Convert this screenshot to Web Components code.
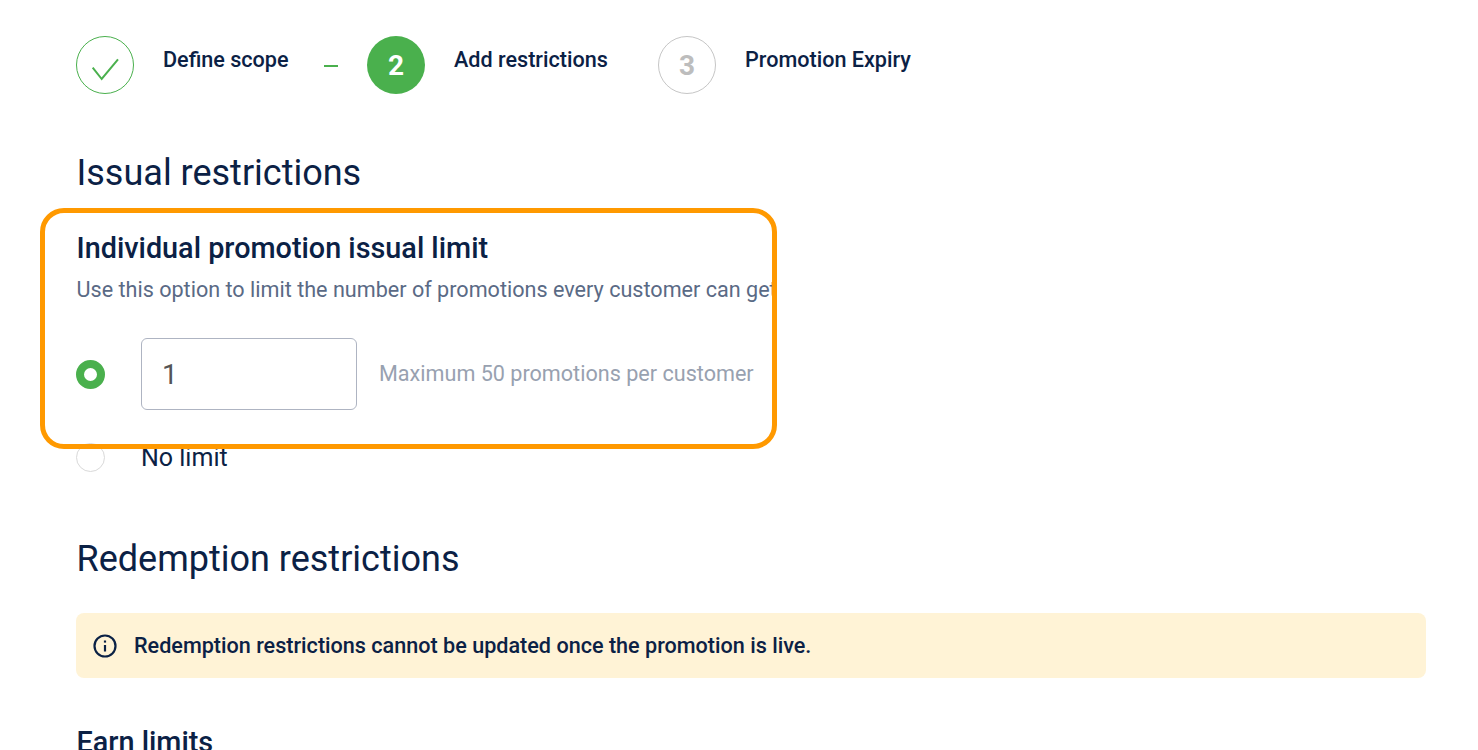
<!DOCTYPE html>
<html>
<head>
<meta charset="utf-8">
<title>Add restrictions</title>
<style>
    html, body { margin: 0; padding: 0; height: 750px; overflow: hidden; background: #fff; }
    body { font-family: Roboto, "Liberation Sans", sans-serif; color: #0b2145; }
</style>
</head>
<body>
<promo-page>
    <promo-stepper>
        <promo-step state="done" label="Define scope"></promo-step>
        <promo-step state="active" number="2" label="Add restrictions"></promo-step>
        <promo-step state="todo" number="3" label="Promotion Expiry"></promo-step>
    </promo-stepper>
    <section-title>Issual restrictions</section-title>
    <limit-card></limit-card>
    <section-title class="second">Redemption restrictions</section-title>
    <notice-banner>Redemption restrictions cannot be updated once the promotion is live.</notice-banner>
    <sub-title>Earn limits</sub-title>
</promo-page>

<script>
class PromoPage extends HTMLElement {
    constructor() {
        super();
        this.attachShadow({ mode: "open" }).innerHTML = `
            <style>
                :host { display: block; position: relative; padding: 36px 52px 0 76px; }
            </style>
            <slot></slot>`;
    }
}

class PromoStepper extends HTMLElement {
    constructor() {
        super();
        this.attachShadow({ mode: "open" }).innerHTML = `
            <style>
                :host { display: flex; align-items: flex-start; height: 58px; }
            </style>
            <slot></slot>`;
    }
}

class PromoStep extends HTMLElement {
    constructor() {
        super();
        this.attachShadow({ mode: "open" });
    }

    connectedCallback() {
        const state = this.getAttribute("state");
        const label = this.getAttribute("label");
        const number = this.getAttribute("number");
        const inner = state === "done"
            ? `<svg width="56" height="56" viewBox="0 0 56 56" fill="none"><path d="M15.7 30.7 L24.7 42 L41 22.3" stroke="#4ab04d" stroke-width="2"/></svg>`
            : number;
        this.shadowRoot.innerHTML = `
            <style>
                :host { display: flex; align-items: flex-start; }
                :host([state="done"]) { width: 291px; }
                :host([state="active"]) { width: 291px; }
                .dot {
                    box-sizing: border-box;
                    width: 58px;
                    height: 58px;
                    border-radius: 50%;
                    display: flex;
                    align-items: center;
                    justify-content: center;
                    font-size: 28px;
                    font-weight: 700;
                    flex: none;
                }
                :host([state="done"]) .dot { border: 1px solid #4ab04d; }
                :host([state="active"]) .dot { background: #4ab04d; color: #fff; }
                :host([state="todo"]) .dot { border: 1px solid #c6c6c6; color: #bdbdbd; }
                .label {
                    margin-left: 29px;
                    font-size: 21.6px;
                    line-height: 28px;
                    margin-top: 10px;
                    font-weight: 500;
                    white-space: nowrap;
                }
                .dash {
                    width: 14px;
                    height: 2px;
                    background: #4ab04d;
                    margin: 29px 0 0 35px;
                }
            </style>
            <span class="dot">${inner}</span>
            <span class="label">${label}</span>
            ${state === "done" ? `<span class="dash"></span>` : ""}`;
    }
}

class SectionTitle extends HTMLElement {
    constructor() {
        super();
        this.attachShadow({ mode: "open" }).innerHTML = `
            <style>
                :host {
                    display: block;
                    margin-top: 57px;
                    padding-left: 0.5px;
                    font-size: 36px;
                    line-height: 44px;
                    font-weight: 400;
                    white-space: nowrap;
                }
                :host(.second) { margin-top: 65px; }
            </style>
            <slot></slot>`;
    }
}

class LimitCard extends HTMLElement {
    constructor() {
        super();
        this.attachShadow({ mode: "open" }).innerHTML = `
            <style>
                :host { display: block; position: relative; margin-top: 13px; height: 264px; }
                h3 {
                    margin: 0;
                    padding: 22px 0 0 0.5px;
                    font-size: 28.8px;
                    line-height: 36px;
                    font-weight: 500;
                }
                p {
                    margin: 9px 0 0;
                    padding-left: 0.5px;
                    width: 695.5px;
                    overflow: hidden;
                    white-space: nowrap;
                    font-size: 21.6px;
                    line-height: 30px;
                    color: #5a6a85;
                }
                .row { display: flex; align-items: center; }
                .first { margin-top: 33px; height: 72px; }
                .second { margin-top: 32px; height: 30px; }
                .radio {
                    box-sizing: border-box;
                    width: 29px;
                    height: 29px;
                    border-radius: 50%;
                    margin-right: 36px;
                    flex: none;
                }
                .on { border: 8.5px solid #4ab04d; background: #fff; }
                .off { border: 1px solid #d9d9d9; }
                .field {
                    box-sizing: border-box;
                    width: 216px;
                    height: 72px;
                    border: 1px solid #aeb4c2;
                    border-radius: 6px;
                    padding-left: 20px;
                    display: flex;
                    align-items: center;
                    font-size: 28px;
                    color: #555;
                }
                .hint { margin: -2px 0 0 22px; font-size: 21.6px; color: #98a1b0; white-space: nowrap; }
                .none { padding-top: 2px; font-size: 25px; line-height: 30px; }
                .outline {
                    position: absolute;
                    box-sizing: border-box;
                    left: -36px;
                    top: 0;
                    width: 737px;
                    height: 241px;
                    border: 5px solid #ff9900;
                    border-radius: 24px;
                    pointer-events: none;
                }
            </style>
            <h3>Individual promotion issual limit</h3>
            <p>Use this option to limit the number of promotions every customer can get</p>
            <div class="row first">
                <span class="radio on"></span>
                <span class="field">1</span>
                <span class="hint">Maximum 50 promotions per customer</span>
            </div>
            <div class="row second">
                <span class="radio off"></span>
                <span class="none">No limit</span>
            </div>
            <div class="outline"></div>`;
    }
}

class NoticeBanner extends HTMLElement {
    constructor() {
        super();
        this.attachShadow({ mode: "open" }).innerHTML = `
            <style>
                :host {
                    display: flex;
                    align-items: center;
                    box-sizing: border-box;
                    height: 65px;
                    margin-top: 32px;
                    padding-left: 17px;
                    background: #fff3d6;
                    border-radius: 8px;
                    font-size: 21.6px;
                    font-weight: 500;
                }
                svg { margin-right: 17px; flex: none; }
            </style>
            <svg width="24" height="24" viewBox="0 0 24 24" fill="none" stroke="#0b2145">
                <circle cx="12" cy="12" r="10.5" stroke-width="2.2"/>
                <path d="M12 11 V17.5" stroke-width="2.2"/>
                <path d="M12 6.5 V8.6" stroke-width="2.2"/>
            </svg>
            <span><slot></slot></span>`;
    }
}

class SubTitle extends HTMLElement {
    constructor() {
        super();
        this.attachShadow({ mode: "open" }).innerHTML = `
            <style>
                :host {
                    display: block;
                    margin-top: 46px;
                    padding-left: 0.5px;
                    font-size: 28.8px;
                    line-height: 36px;
                    font-weight: 500;
                }
            </style>
            <slot></slot>`;
    }
}

customElements.define("promo-page", PromoPage);
customElements.define("promo-stepper", PromoStepper);
customElements.define("promo-step", PromoStep);
customElements.define("section-title", SectionTitle);
customElements.define("limit-card", LimitCard);
customElements.define("notice-banner", NoticeBanner);
customElements.define("sub-title", SubTitle);
</script>
</body>
</html>
